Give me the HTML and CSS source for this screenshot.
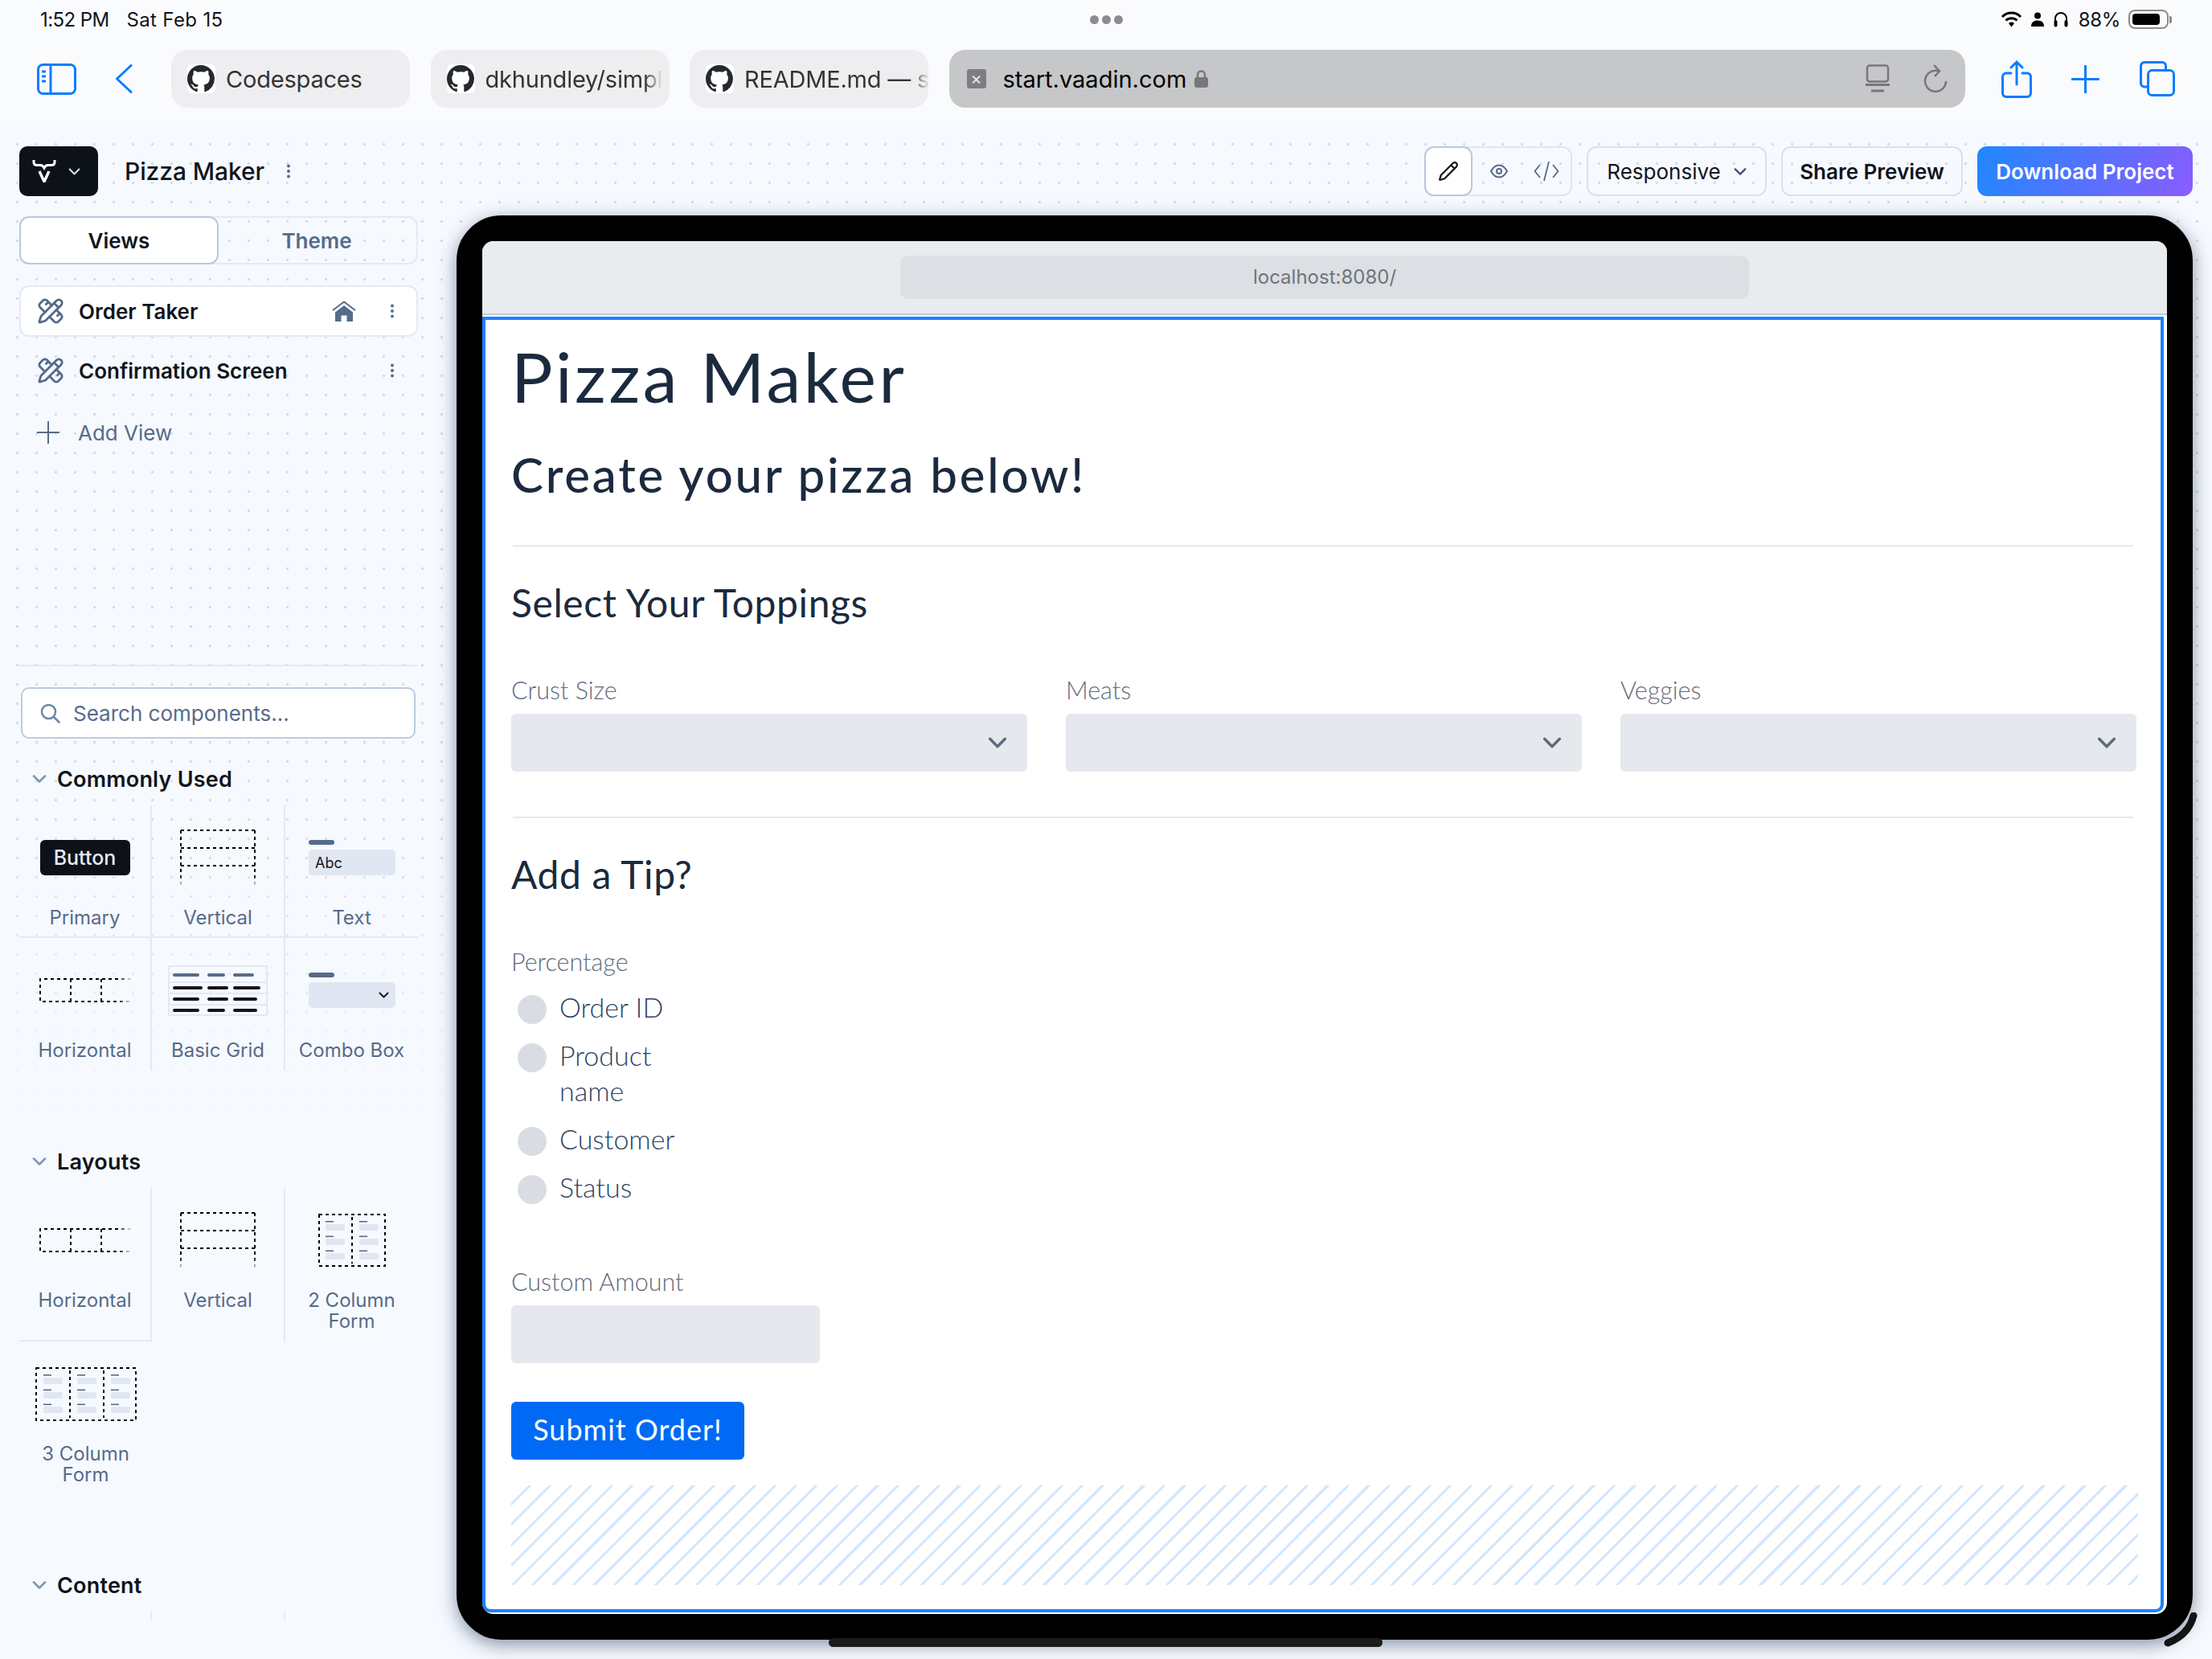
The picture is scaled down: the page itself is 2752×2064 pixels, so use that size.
FILE: index.html
```html
<!DOCTYPE html>
<html lang="en">
<head>
    <meta charset="UTF-8">
    <meta name="viewport" content="width=device-width, initial-scale=1.0">
    <title>Pizza Maker</title>
    <link rel="stylesheet" href="styles.css">
</head>
<body>
    <svg class="sprite" width="0" height="0">
        <symbol id="gh" viewBox="0 0 16 16"><path fill="currentColor" d="M8 0C3.58 0 0 3.58 0 8c0 3.54 2.29 6.53 5.47 7.59.4.07.55-.17.55-.38 0-.19-.01-.82-.01-1.49-2.01.37-2.53-.49-2.69-.94-.09-.23-.48-.94-.82-1.13-.28-.15-.68-.52-.01-.53.63-.01 1.08.58 1.23.82.72 1.21 1.87.87 2.33.66.07-.52.28-.87.51-1.07-1.78-.2-3.64-.89-3.64-3.95 0-.87.31-1.59.82-2.15-.08-.2-.36-1.02.08-2.12 0 0 .67-.21 2.2.82.64-.18 1.32-.27 2-.27.68 0 1.36.09 2 .27 1.53-1.04 2.2-.82 2.2-.82.44 1.1.16 1.92.08 2.12.51.56.82 1.27.82 2.15 0 3.07-1.87 3.75-3.65 3.95.29.25.54.73.54 1.48 0 1.07-.01 1.93-.01 2.2 0 .21.15.46.55.38A8.013 8.013 0 0016 8c0-4.42-3.58-8-8-8z"/></symbol>
        <symbol id="tools" viewBox="0 0 24 24"><g fill="none" stroke="currentColor" stroke-width="2" stroke-linecap="round" stroke-linejoin="round"><path d="M13 7 8.7 2.7a2.41 2.41 0 0 0-3.4 0L2.7 5.3a2.41 2.41 0 0 0 0 3.4L7 13"/><path d="m8 6 2-2"/><path d="m18 16 2-2"/><path d="m17 11 4.3 4.3c.94.94.94 2.46 0 3.4l-2.6 2.6c-.94.94-2.46.94-3.4 0L11 17"/><path d="M21.174 6.812a1 1 0 0 0-3.986-3.987L3.842 16.174a2 2 0 0 0-.5.83l-1.321 4.352a.5.5 0 0 0 .623.622l4.353-1.32a2 2 0 0 0 .83-.497z"/><path d="m15 5 4 4"/></g></symbol>
        <symbol id="kebab" viewBox="0 0 6 18"><g fill="currentColor"><circle cx="3" cy="2.5" r="2"/><circle cx="3" cy="9" r="2"/><circle cx="3" cy="15.5" r="2"/></g></symbol>
        <symbol id="chev" viewBox="0 0 18 10"><path d="M2 1.5 9 8.5 16 1.5" fill="none" stroke="currentColor" stroke-width="2.6" stroke-linecap="round" stroke-linejoin="round"/></symbol>
        <symbol id="vert" viewBox="0 0 94 70"><defs><linearGradient id="fadeV" gradientUnits="userSpaceOnUse" x1="0" y1="0" x2="0" y2="70"><stop offset=".8" stop-color="#000"/><stop offset="1" stop-color="#10151c" stop-opacity=".1"/></linearGradient></defs><g fill="none" stroke-width="2" stroke-dasharray="4 4" shape-rendering="crispEdges"><path stroke="#000" d="M1 1H93M1 23H93M1 45H93"/><path stroke="url(#fadeV)" d="M1 1V70M93 1V70"/></g></symbol>
        <symbol id="horiz" viewBox="0 0 114 30"><defs><linearGradient id="fadeH" gradientUnits="userSpaceOnUse" x1="0" y1="0" x2="114" y2="0"><stop offset=".85" stop-color="#000"/><stop offset="1" stop-color="#10151c" stop-opacity=".1"/></linearGradient></defs><g fill="none" stroke="url(#fadeH)" stroke-width="2" stroke-dasharray="4 4" shape-rendering="crispEdges"><path d="M114 1H1V29H114"/><path d="M39 1V30M77 1V30"/></g></symbol>
        <symbol id="fcol" viewBox="0 0 24 48"><g fill="#e1e7f2"><rect y="4" width="24" height="8" rx="2"/><rect y="22" width="24" height="8" rx="2"/><rect y="40" width="24" height="8" rx="2"/></g><g fill="#566b8a"><rect width="10" height="1.6"/><rect y="18.5" width="10" height="1.6"/><rect y="36.5" width="10" height="1.6"/></g></symbol>
    </svg>

    <header class="topbar">
        <div class="status">
            <div class="status-time"><span class="clock">1:52 PM</span><span class="date">Sat Feb 15</span></div>
            <div class="status-dots"><i></i><i></i><i></i></div>
            <div class="status-right">
                <svg width="27" height="20" viewBox="0 0 26 20"><g fill="none" stroke="#000" stroke-width="3"><path d="M1.5 7a16 16 0 0 1 23 0"/><path d="M6 11.500a10 10 0 0 1 14 0"/></g><path d="M9.500 15a5 5 0 0 1 7 0L13 19.500z"/></svg>
                <svg width="18" height="18" viewBox="0 0 18 18"><circle cx="9" cy="4.500" r="4"/><path d="M1 18c0-5 3-7.500 8-7.500s8 2.500 8 7.500z"/></svg>
                <svg width="20" height="20" viewBox="0 0 20 20"><path d="M3 12V9a7 7 0 0 1 14 0v3" fill="none" stroke="#000" stroke-width="2"/><rect x="1.500" y="11" width="4" height="8.500" rx="2"/><rect x="14.500" y="11" width="4" height="8.500" rx="2"/></svg>
                <span class="status-pct">88%</span>
                <div class="battery"><div class="battery-fill"></div></div>
                <div class="battery-nub"></div>
            </div>
        </div>
        <div class="browser">
            <svg class="ic-side" width="49" height="39" viewBox="0 0 49 39"><g fill="none" stroke="#0a7cff" stroke-width="3"><rect x="1.500" y="1.500" width="46" height="36" rx="6"/><path d="M17 2V37"/><path d="M6 10H11M6 16H11M6 22H11"/></g></svg>
            <svg class="ic-back" width="22" height="36" viewBox="0 0 22 36"><path d="M20 1.500 2.500 18 20 34.500" fill="none" stroke="#0a7cff" stroke-width="3" stroke-linecap="round" stroke-linejoin="round"/></svg>
            <div class="tab"><div class="tab-fav"><svg width="34" height="34"><use href="#gh"/></svg></div><span class="tab-text">Codespaces</span></div>
            <div class="tab"><div class="tab-fav"><svg width="34" height="34"><use href="#gh"/></svg></div><span class="tab-text tab-fade">dkhundley/simpl</span></div>
            <div class="tab"><div class="tab-fav"><svg width="34" height="34"><use href="#gh"/></svg></div><span class="tab-text tab-fade">README.md — s</span></div>
            <div class="tab tab-active">
                <div class="close-fav">×</div>
                <span class="url">start.vaadin.com</span>
                <svg class="ic-lock" width="17" height="22" viewBox="0 0 17 22"><path d="M4 10V6a4.500 4.500 0 0 1 9 0v4" fill="none" stroke="#77777b" stroke-width="2.500"/><rect y="9" width="17" height="13" rx="3" fill="#77777b"/></svg>
                <svg class="ic-reader" width="30" height="36" viewBox="0 0 30 36"><g fill="none" stroke="#77777b" stroke-width="2.500"><rect x="2" y="1.500" width="26" height="20" rx="3"/></g><path d="M0 25.500H30M7 33H23" stroke="#77777b" stroke-width="3"/></svg>
                <svg class="ic-reload" width="30" height="36" viewBox="0 0 30 36"><g fill="none" stroke="#77777b" stroke-width="2.500"><path d="M19 8.500A13 13 0 1 0 28 21"/><path d="M13 1 20 8.500 14 15"/></g></svg>
            </div>
            <svg class="ic-share" width="38" height="47" viewBox="0 0 38 47"><g fill="none" stroke="#0a7cff" stroke-width="3" stroke-linecap="round"><path d="M12 16H6a4.500 4.500 0 0 0-4.500 4.500V41A4.500 4.500 0 0 0 6 45.500H32a4.500 4.500 0 0 0 4.500-4.500V20.500A4.500 4.500 0 0 0 32 16H26"/><path d="M19 30V2M12 9 19 2 26 9"/></g></svg>
            <svg class="ic-plus" width="35" height="35" viewBox="0 0 35 35"><path d="M17.500 1V34M1 17.500H34" stroke="#0a7cff" stroke-width="3" stroke-linecap="round"/></svg>
            <svg class="ic-tabs" width="44" height="44" viewBox="0 0 44 44"><g fill="none" stroke="#0a7cff" stroke-width="3"><path d="M9 32H6a4.500 4.500 0 0 1-4.500-4.500V6A4.500 4.500 0 0 1 6 1.500H28A4.500 4.500 0 0 1 32.500 6V11"/><rect x="10.500" y="11.500" width="32" height="31" rx="5"/></g></svg>
        </div>
    </header>

    <div class="app">
        <div class="toolbar">
            <div class="brand">
                <svg width="30" height="28" viewBox="0 0 30 28"><path fill="none" stroke="#fff" stroke-width="3" d="M2 0V2.500C2 5 3.500 6.500 6 6.500H10.500C13 6.500 14 8 15 10 16 8 17 6.500 19.500 6.500H24C26.500 6.500 28 5 28 2.500V0"/><path d="M9 14 15 27 21 14" fill="none" stroke="#fff" stroke-width="3.400" stroke-linejoin="round"/></svg>
                <svg class="brand-chev" width="15" height="9"><use href="#chev"/></svg>
            </div>
            <span class="project">Pizza Maker</span>
            <svg class="project-menu" width="6" height="18"><use href="#kebab"/></svg>
            <div class="toolbar-right">
                <div class="seg">
                    <div class="seg-btn seg-on"><svg width="26" height="26" viewBox="0 0 24 24"><g fill="none" stroke="#10151c" stroke-width="2" stroke-linecap="round" stroke-linejoin="round"><path d="M21.200 6.800a2.800 2.800 0 0 0-4-4L3.800 16.200a2 2 0 0 0-.5.800L2 21.400a.5.5 0 0 0 .6.6l4.400-1.300a2 2 0 0 0 .8-.5z"/><path d="m15 5 4 4"/></g></svg></div>
                    <div class="seg-btn"><svg width="26" height="24" viewBox="0 0 24 24"><g fill="none" stroke="#566b8a" stroke-width="2"><path d="M2 12C5 6.500 8 4.500 12 4.500S19 6.500 22 12C19 17.500 16 19.500 12 19.500S5 17.500 2 12Z"/><circle cx="12" cy="12" r="3"/></g></svg></div>
                    <div class="seg-btn"><svg width="32" height="26" viewBox="0 0 32 26"><path d="M8 5 1.500 13 8 21M24 5 30.500 13 24 21M19 1 13 25" fill="none" stroke="#566b8a" stroke-width="1.800"/></svg></div>
                </div>
                <div class="tool-btn tool-resp">Responsive<svg width="16" height="9" class="resp-chev"><use href="#chev"/></svg></div>
                <div class="tool-btn tool-share">Share Preview</div>
                <div class="tool-btn tool-download">Download Project</div>
            </div>
        </div>

        <div class="main">
            <aside class="sidebar">
                <div class="side-tabs">
                    <div class="side-tab side-tab-on">Views</div>
                    <div class="side-tab">Theme</div>
                </div>
                <div class="view-row view-row-on">
                    <svg class="view-icon" width="34" height="34"><use href="#tools"/></svg>
                    <span class="view-name">Order Taker</span>
                    <svg class="view-home" width="30" height="26" viewBox="0 0 30 26"><path d="M15 6 4 14.500V26H11.500V18.500H18.500V26H26V14.500Z" fill="#566b8a"/><path d="M1 12 15 1.500 29 12" fill="none" stroke="#566b8a" stroke-width="2"/></svg>
                    <svg class="view-menu" width="6" height="18"><use href="#kebab"/></svg>
                </div>
                <div class="view-row">
                    <svg class="view-icon" width="34" height="34"><use href="#tools"/></svg>
                    <span class="view-name">Confirmation Screen</span>
                    <svg class="view-menu" width="6" height="18"><use href="#kebab"/></svg>
                </div>
                <div class="add-view">
                    <svg width="28" height="28" viewBox="0 0 28 28"><path d="M14 0V28M0 14H28" stroke="#566b8a" stroke-width="2"/></svg>
                    <span>Add View</span>
                </div>
                <div class="side-divider"></div>
                <div class="search">
                    <svg width="25" height="25" viewBox="0 0 25 25"><g fill="none" stroke="#6d86a8" stroke-width="2.500" stroke-linecap="round"><circle cx="10.500" cy="10.500" r="8.500"/><path d="m17 17 6.500 6.500"/></g></svg>
                    <span>Search components...</span>
                </div>

                <div class="sec-head sec-first"><svg width="18" height="10"><use href="#chev"/></svg><span>Commonly Used</span></div>
                <div class="tiles tiles-common">
                    <div class="tile b-r b-b">
                        <div class="tile-art"><div class="mini-button">Button</div></div>
                        <div class="tile-label">Primary</div>
                    </div>
                    <div class="tile b-r b-b">
                        <div class="tile-art"><svg width="94" height="70"><use href="#vert"/></svg></div>
                        <div class="tile-label">Vertical</div>
                    </div>
                    <div class="tile b-b">
                        <div class="tile-art">
                            <div class="mini-field"><div class="mini-bar"></div><div class="mini-input">Abc</div></div>
                        </div>
                        <div class="tile-label">Text</div>
                    </div>
                    <div class="tile b-r">
                        <div class="tile-art"><svg width="114" height="30"><use href="#horiz"/></svg></div>
                        <div class="tile-label">Horizontal</div>
                    </div>
                    <div class="tile b-r">
                        <div class="tile-art">
                            <svg width="124" height="63" viewBox="0 0 124 63"><g fill="none" stroke="#e3e9f3" stroke-width="2"><rect x="1" y="1" width="122" height="61"/><path d="M1 21H123M1 35H123M1 49H123"/></g><g stroke-width="4" stroke-linecap="round"><path stroke="#566b8a" d="M8 12H37M51 12H69M83 12H105"/><path stroke="#10151c" d="M8 28H41M51 28H73M83 28H113M8 42H37M51 42H73M83 42H109M8 56H37M51 56H69M83 56H109"/></g></svg>
                        </div>
                        <div class="tile-label">Basic Grid</div>
                    </div>
                    <div class="tile">
                        <div class="tile-art">
                            <div class="mini-field"><div class="mini-bar"></div><div class="mini-input mini-combo"><svg width="13" height="8"><use href="#chev"/></svg></div></div>
                        </div>
                        <div class="tile-label">Combo Box</div>
                    </div>
                </div>

                <div class="sec-head sec-next"><svg width="18" height="10"><use href="#chev"/></svg><span>Layouts</span></div>
                <div class="tiles tiles-layouts">
                    <div class="tile b-r b-b">
                        <div class="tile-art"><svg width="114" height="30"><use href="#horiz"/></svg></div>
                        <div class="tile-label">Horizontal</div>
                    </div>
                    <div class="tile b-r">
                        <div class="tile-art"><svg width="94" height="70"><use href="#vert"/></svg></div>
                        <div class="tile-label">Vertical</div>
                    </div>
                    <div class="tile">
                        <div class="tile-art">
                            <svg width="84" height="66" viewBox="0 0 84 66"><g fill="none" stroke="#000" stroke-width="2" stroke-dasharray="4 4" shape-rendering="crispEdges"><rect x="1" y="1" width="82" height="64"/><path d="M42 4V62"/></g><use href="#fcol" x="9" y="9" width="24" height="48"/><use href="#fcol" x="51" y="9" width="24" height="48"/></svg>
                        </div>
                        <div class="tile-label">2 Column<br>Form</div>
                    </div>
                    <div class="tile">
                        <div class="tile-art">
                            <svg width="126" height="67" viewBox="0 0 126 67"><g fill="none" stroke="#000" stroke-width="2" stroke-dasharray="4 4" shape-rendering="crispEdges"><rect x="1" y="1" width="124" height="65"/><path d="M43 4V63M85 4V63"/></g><use href="#fcol" x="10" y="9" width="24" height="48"/><use href="#fcol" x="52" y="9" width="24" height="48"/><use href="#fcol" x="94" y="9" width="24" height="48"/></svg>
                        </div>
                        <div class="tile-label">3 Column<br>Form</div>
                    </div>
                </div>

                <div class="sec-head sec-last"><svg width="18" height="10"><use href="#chev"/></svg><span>Content</span></div>
                <div class="tiles-stub"><div class="b-r"></div><div class="b-r"></div><div></div></div>
            </aside>

            <section class="device">
                <div class="screen">
                    <div class="chrome"><div class="address">localhost:8080/</div></div>
                    <div class="canvas">
                        <h1>Pizza Maker</h1>
                        <h2>Create your pizza below!</h2>
                        <hr>
                        <h3>Select Your Toppings</h3>
                        <div class="fields">
                            <div>
                                <label class="lbl">Crust Size</label>
                                <div class="select"><svg width="24" height="14"><use href="#chev"/></svg></div>
                            </div>
                            <div>
                                <label class="lbl">Meats</label>
                                <div class="select"><svg width="24" height="14"><use href="#chev"/></svg></div>
                            </div>
                            <div>
                                <label class="lbl">Veggies</label>
                                <div class="select"><svg width="24" height="14"><use href="#chev"/></svg></div>
                            </div>
                        </div>
                        <hr class="hr-tip">
                        <h3>Add a Tip?</h3>
                        <label class="lbl lbl-pct">Percentage</label>
                        <div class="radios">
                            <div class="radio"><i></i><span>Order ID</span></div>
                            <div class="radio"><i></i><span>Product<br>name</span></div>
                            <div class="radio"><i></i><span>Customer</span></div>
                            <div class="radio"><i></i><span>Status</span></div>
                        </div>
                        <label class="lbl lbl-amount">Custom Amount</label>
                        <div class="amount"></div>
                        <button class="submit">Submit Order!</button>
                        <div class="hatch"></div>
                    </div>
                </div>
                <div class="home-bar"></div>
                <svg class="corner" width="44" height="44" viewBox="0 0 44 44"><path d="M37 4C33 20 23 31 5 38" fill="none" stroke="#141414" stroke-width="9" stroke-linecap="round"/></svg>
            </section>
        </div>
    </div>
</body>
</html>
```

FILE: styles.css
```css
* {
    box-sizing: border-box;
}

html,
body {
    margin: 0;
    padding: 0;
}

body {
    width: 2752px;
    height: 2064px;
    overflow: hidden;
    font-family: Inter, "Liberation Sans", sans-serif;
    background-color: #f6f9fe;
    color: #10151c;
}

.sprite {
    position: absolute;
}

svg {
    display: block;
    flex: none;
}

/* ipad status + safari bar */
.topbar {
    height: 158px;
    background-color: #fafbfd;
}

.status {
    display: grid;
    grid-template-columns: 1fr auto 1fr;
    align-items: center;
    height: 48px;
    padding: 0 50px;
}

.status-time {
    display: flex;
    gap: 22px;
    font-size: 24px;
}

.clock {
    letter-spacing: -0.6px;
}

.date {
    letter-spacing: 0.35px;
}

.status-dots {
    display: flex;
    gap: 4px;
}

.status-dots i {
    width: 11px;
    height: 11px;
    border-radius: 50%;
    background-color: #8c8c90;
}

.status-right {
    display: flex;
    align-items: center;
    justify-content: flex-end;
    gap: 10px;
}

.status-pct {
    margin-left: 2px;
    font-size: 24px;
    letter-spacing: -0.3px;
}

.battery {
    width: 50px;
    height: 24px;
    padding: 3px;
    border: 2px solid #8c8c90;
    border-radius: 8px;
}

.battery-fill {
    width: 85%;
    height: 100%;
    border-radius: 4px;
    background-color: #000;
}

.battery-nub {
    width: 3px;
    height: 9px;
    margin-left: -9px;
    border-radius: 0 2px 2px 0;
    background-color: #8c8c90;
}

.browser {
    display: flex;
    align-items: center;
    height: 72px;
    margin-top: 14px;
    padding-left: 46px;
}

.ic-back {
    margin-left: 48px;
}

.tab {
    display: flex;
    flex: none;
    align-items: center;
    width: 297px;
    height: 72px;
    margin-right: 25.5px;
    padding: 0 4px 0 20px;
    border-radius: 20px;
    background-color: #eeeef0;
    font-size: 29px;
    color: #333;
    overflow: hidden;
}

.ic-back + .tab {
    margin-left: 48px;
}

.tab-fav {
    flex: none;
    width: 35px;
    height: 36px;
    padding-top: 1px;
    border-radius: 6px;
    background-color: #fff;
    color: #24292e;
}

.tab-text {
    margin-left: 13px;
    white-space: nowrap;
    letter-spacing: -0.2px;
}

.tab-fade {
    -webkit-mask-image: linear-gradient(to right, #000 90%, transparent);
    mask-image: linear-gradient(to right, #000 90%, transparent);
}

.tab-active {
    width: 1264px;
    margin-right: 0;
    padding: 0 22px 0 22px;
    background-color: #c6c7c9;
    color: #000;
}

.close-fav {
    width: 24px;
    height: 24px;
    border-radius: 3px;
    background-color: #7e7e82;
    color: #e8e8e8;
    font-size: 22px;
    line-height: 23px;
    text-align: center;
}

.url {
    margin-left: 21px;
    white-space: nowrap;
}

.ic-lock {
    margin-left: 10px;
}

.ic-reader {
    margin-left: auto;
}

.ic-reload {
    margin-left: 42px;
}

.ic-share {
    margin-left: 45px;
}

.ic-plus {
    margin-left: 49px;
}

.ic-tabs {
    margin-left: 50px;
}

/* app area */
.app {
    height: 1906px;
    background-image:
        linear-gradient(to bottom, transparent 45%, #f6f9fe 65%),
        radial-gradient(circle at 1.5px 1.5px, #d5dde9 1.4px, transparent 1.8px);
    background-size: 100% 100%, 24px 24px;
    background-position: 0 0, 20px 20px;
    padding-top: 24px;
}

.toolbar {
    display: flex;
    align-items: center;
    height: 62px;
    padding: 0 24px;
}

.brand {
    display: flex;
    align-items: center;
    width: 98px;
    height: 62px;
    padding-left: 16px;
    border-radius: 10px;
    background-color: #0d1219;
}

.brand-chev {
    margin-left: 15px;
    color: #d6dce6;
}

.project {
    margin-left: 33px;
    font-size: 30px;
    font-weight: 500;
    letter-spacing: -0.1px;
}

.project-menu {
    margin-left: 27px;
    color: #566b8a;
}

.toolbar-right {
    display: flex;
    align-items: center;
    gap: 18px;
    margin-left: auto;
}

.seg {
    display: flex;
    width: 184px;
    height: 62px;
    border: 2px solid #dfe6f0;
    border-radius: 12px;
}

.seg-btn {
    display: flex;
    flex: 1;
    align-items: center;
    justify-content: center;
}

.seg-on {
    flex: none;
    width: 60px;
    margin: -2px 3px -2px -2px;
    border: 2px solid #b9c8dc;
    border-radius: 12px;
    background-color: #fff;
}

.tool-btn {
    display: flex;
    align-items: center;
    justify-content: center;
    height: 62px;
    border: 2px solid #d8e1ee;
    border-radius: 12px;
    font-size: 26px;
}

.tool-resp {
    width: 224px;
    gap: 16px;
}

.resp-chev {
    color: #3f5270;
}

.tool-share {
    width: 226px;
    font-weight: 600;
}

.tool-download {
    width: 268px;
    border: none;
    background-image: linear-gradient(115deg, #1f88ff, #8a5cff);
    color: #fff;
    font-weight: 600;
}

.main {
    display: flex;
    padding-top: 24px;
}

/* left panel */
.sidebar {
    flex: none;
    width: 496px;
    margin-left: 24px;
    padding-top: 1px;
}

.side-tabs {
    display: flex;
    height: 60px;
    border: 2px solid #e3eaf4;
    border-radius: 12px;
    font-size: 26px;
    font-weight: 600;
    color: #566b8a;
}

.side-tab {
    display: flex;
    flex: 1;
    align-items: center;
    justify-content: center;
}

.side-tab-on {
    flex: none;
    width: 248px;
    margin: -2px;
    border: 2px solid #b9c8dc;
    border-radius: 12px;
    background-color: #fff;
    color: #10151c;
}

.view-row {
    display: flex;
    align-items: center;
    height: 64px;
    margin-top: 10px;
    padding: 0 27px 0 20px;
    border: 2px solid transparent;
    border-radius: 12px;
    color: #566b8a;
}

.view-row-on {
    margin-top: 26px;
    border-color: #e3eaf4;
    background-color: #fff;
}

.view-name {
    margin-left: 18px;
    font-size: 26px;
    font-weight: 600;
    color: #10151c;
}

.view-home {
    margin-left: auto;
}

.view-home + .view-menu {
    margin-left: 42px;
}

.view-name + .view-menu {
    margin-left: auto;
}

.add-view {
    display: flex;
    align-items: center;
    height: 44px;
    margin-top: 23px;
    padding-left: 22px;
    font-size: 26px;
    color: #566b8a;
}

.add-view span {
    margin-left: 23px;
}

.side-divider {
    height: 2px;
    margin-top: 267px;
    background-color: #e3eaf4;
}

.search {
    display: flex;
    align-items: center;
    height: 64px;
    margin: 26px 3px 0 2px;
    padding-left: 22px;
    border: 2px solid #bccbe0;
    border-radius: 10px;
    background-color: #fff;
    font-size: 26px;
    color: #566b8a;
}

.search span {
    margin-left: 16px;
}

.sec-head {
    display: flex;
    align-items: center;
    height: 36px;
    padding-left: 16px;
    font-size: 27px;
    font-weight: 600;
    letter-spacing: 0.2px;
    color: #10151c;
}

.sec-head svg {
    color: #8497b3;
}

.sec-head span {
    margin-left: 13px;
}

.sec-first {
    margin-top: 32px;
}

.sec-next {
    margin-top: 95px;
}

.sec-last {
    margin-top: 94px;
}

.tiles {
    display: grid;
    grid-template-columns: 165px 166px 165px;
    margin-top: 15px;
}

.tiles-common {
    grid-auto-rows: 165px;
}

.tiles-layouts {
    grid-auto-rows: 191px;
}

.tile {
    padding-top: 20px;
    text-align: center;
}

.b-r {
    border-right: 2px solid #e3eaf4;
}

.b-b {
    border-bottom: 2px solid #e3eaf4;
}

.tile-art {
    display: flex;
    align-items: center;
    justify-content: center;
    height: 90px;
}

.tile-label {
    margin-top: 17px;
    font-size: 24px;
    line-height: 26px;
    color: #566b8a;
}

.mini-button {
    width: 112px;
    height: 44px;
    border-radius: 6px;
    background-color: #0d1219;
    color: #e6ebf3;
    font-size: 25px;
    font-weight: 500;
    line-height: 44px;
}

.mini-field {
    width: 108px;
    margin-left: 1px;
}

.mini-bar {
    width: 32px;
    height: 6px;
    border-radius: 3px;
    background-color: #566b8a;
}

.mini-input {
    display: flex;
    align-items: center;
    height: 32px;
    margin-top: 6px;
    padding: 0 8px;
    border-radius: 5px;
    background-color: #e1e7f2;
    font-size: 18px;
    color: #10151c;
}

.mini-combo {
    justify-content: flex-end;
}

.tiles-stub {
    display: grid;
    grid-template-columns: 165px 166px 165px;
    height: 10px;
    margin-top: 15px;
}

/* preview device */
.device {
    position: relative;
    flex: none;
    width: 2160px;
    height: 1772px;
    margin-left: 48px;
    border: 32px solid #000;
    border-radius: 56px;
    box-shadow: 0 6px 22px rgba(40, 60, 95, 0.55);
}

.screen {
    height: 100%;
    border-radius: 14px;
    background-color: #fff;
    overflow: hidden;
}

.chrome {
    display: flex;
    justify-content: center;
    height: 92px;
    padding-top: 18px;
    border-bottom: 2px solid #c2cbd2;
    background-color: #e8ecef;
}

.address {
    width: 1056px;
    height: 54px;
    border-radius: 10px;
    background-color: #dcdfe3;
    color: #6c757d;
    font-size: 24px;
    line-height: 54px;
    text-align: center;
}

.canvas {
    height: 1612px;
    margin: 2px 4px 0 0;
    padding: 25px 32px 0;
    border: 4px solid #1a82ff;
    border-radius: 0 0 10px 10px;
    font-family: Lato, "Noto Sans", sans-serif;
    color: #1b2a3e;
}

.canvas h1 {
    margin: 0;
    font-size: 86px;
    font-weight: 400;
    line-height: 90px;
    letter-spacing: 3.5px;
}

.canvas h2 {
    margin: 37px 0 0;
    font-size: 60px;
    font-weight: 500;
    line-height: 80px;
    letter-spacing: 2.8px;
}

.canvas h3 {
    margin: 40px 0 0;
    font-size: 48px;
    font-weight: 400;
    line-height: 60px;
    letter-spacing: 0.6px;
}

.canvas hr {
    height: 2px;
    margin: 48px 2px 0;
    border: none;
    background-color: #e6e9ed;
}

.canvas .hr-tip {
    margin-top: 56px;
}

.fields {
    display: grid;
    grid-template-columns: repeat(3, 642px);
    gap: 48px;
    margin-top: 58px;
}

.lbl {
    display: block;
    font-size: 30.5px;
    font-weight: 300;
    line-height: 40px;
    color: #5f6b7c;
}

.select {
    display: flex;
    align-items: center;
    justify-content: flex-end;
    height: 72px;
    margin-top: 10px;
    padding-right: 25px;
    border-radius: 6px;
    background-color: #e5e8ed;
    color: #5f6b7c;
}

.lbl-pct {
    margin-top: 58px;
}

.radios {
    margin-top: 15px;
}

.radio {
    display: flex;
    margin-bottom: 16px;
    padding-left: 8px;
    font-size: 34px;
    font-weight: 300;
    line-height: 44px;
    color: #2d4361;
}

.radio i {
    flex: none;
    width: 36px;
    height: 36px;
    margin: 7px 16px 0 0;
    border-radius: 50%;
    background-color: #d9dde3;
}

.lbl-amount {
    margin-top: 75px;
}

.amount {
    width: 384px;
    height: 72px;
    margin-top: 10px;
    border-radius: 6px;
    background-color: #e5e8ed;
}

.submit {
    display: block;
    width: 290px;
    height: 72px;
    margin-top: 48px;
    padding-bottom: 5px;
    border: none;
    border-radius: 6px;
    background-color: #006af5;
    color: #fff;
    font-family: Lato, "Noto Sans", sans-serif;
    font-size: 36px;
    letter-spacing: 1px;
}

.hatch {
    width: 2024px;
    height: 124px;
    margin-top: 32px;
    background-image: repeating-linear-gradient(135deg, transparent 0 15px, #d2e6ff 15px 18px);
}

.home-bar {
    position: absolute;
    left: 431px;
    bottom: -41px;
    width: 689px;
    height: 11px;
    border-radius: 6px;
    background-color: #1c1c1c;
}

.corner {
    position: absolute;
    right: -40px;
    bottom: -42px;
}
```
